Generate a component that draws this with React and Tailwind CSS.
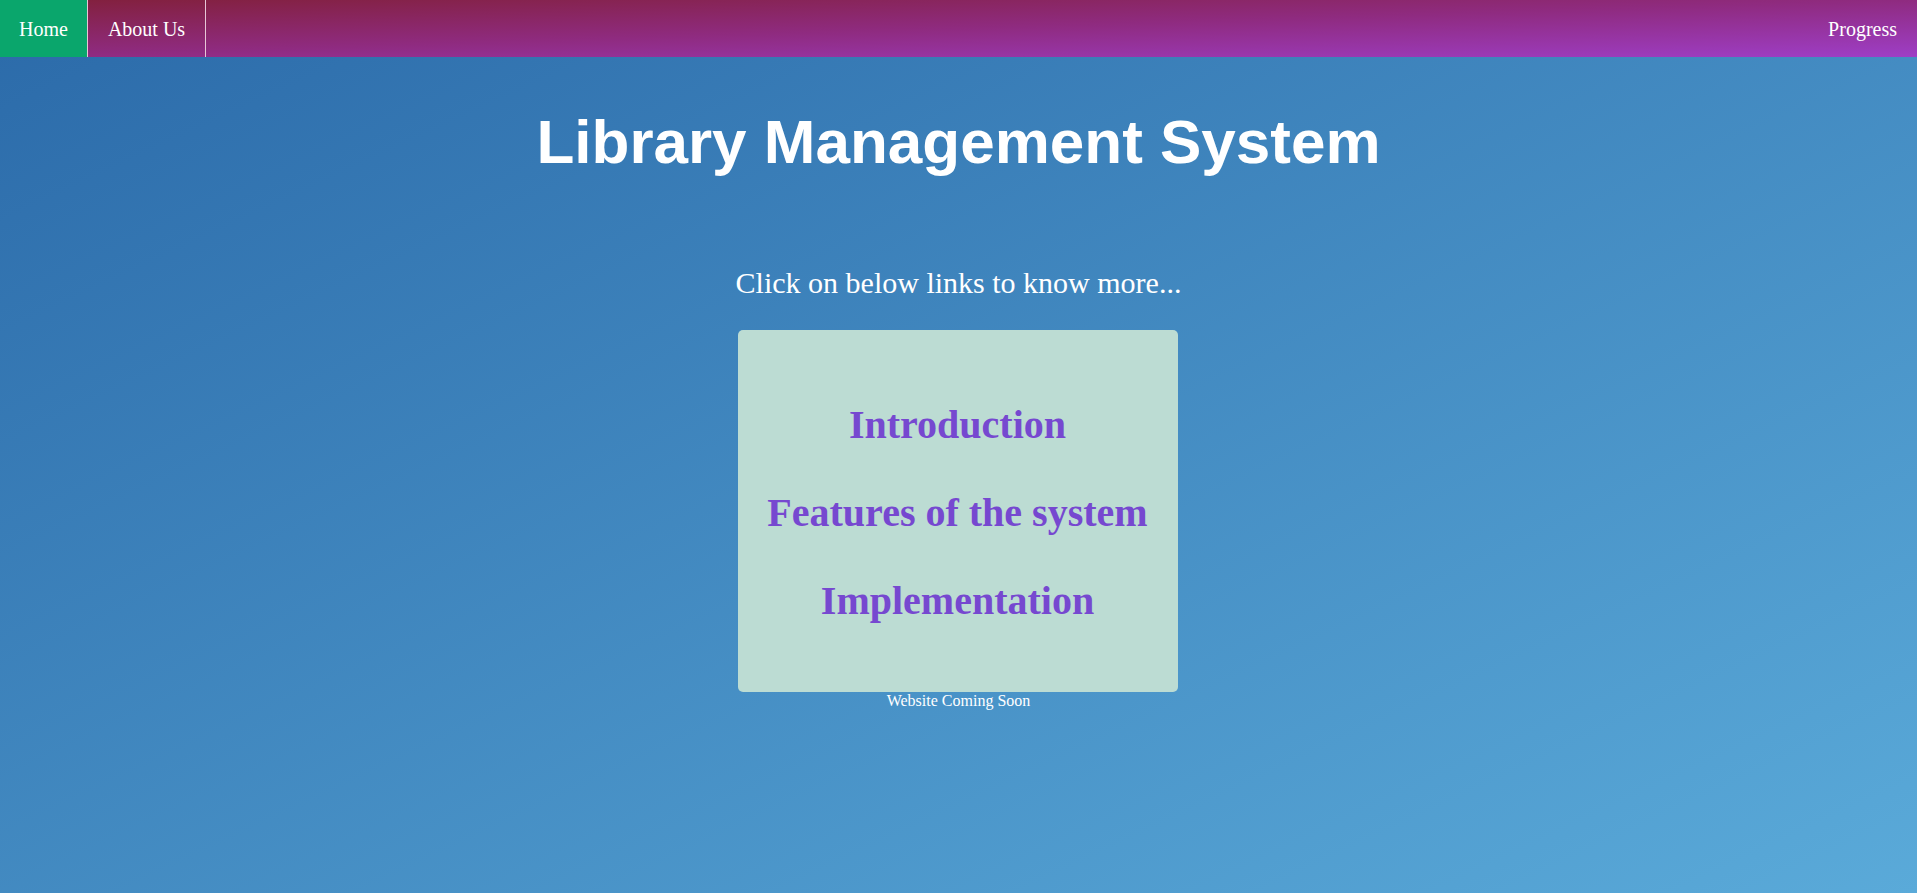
import React from "react";

const links = ["Introduction", "Features of the system", "Implementation"];

export default function App() {
  return (
    <div className="min-h-screen bg-[linear-gradient(to_bottom_right,#2b6aa9,#5aaad9)] font-['Liberation_Serif',serif] text-white">
      <nav className="flex h-[57px] items-stretch bg-[linear-gradient(to_bottom_right,#82203c_0%,#8f2b80_50%,#9e3ec6_100%)] text-[20px]">
        <a className="flex items-center border-r border-[#e7c7d6] bg-[#0aa66c] px-[19px]" href="#">
          Home
        </a>
        <a className="flex items-center border-r border-[#e7c7d6] px-5" href="#">
          About Us
        </a>
        <a className="ml-auto flex items-center px-5" href="#">
          Progress
        </a>
      </nav>

      <h1 className="mt-[49px] text-center font-['Liberation_Sans',sans-serif] text-[62px] font-bold leading-[72px]">
        Library Management System
      </h1>

      <p className="mt-[88px] text-center text-[30px] leading-[34px]">
        Click on below links to know more...
      </p>

      <div className="mx-auto mt-[30px] flex h-[362px] w-[440px] -translate-x-px flex-col items-center justify-center gap-[42px] rounded-[5px] bg-[#bcdcd3] pt-1">
        {links.map((l) => (
          <a key={l} href="#" className="text-[40px] font-bold leading-[46px] text-[#7648d0]">
            {l}
          </a>
        ))}
      </div>
      <p className="text-center text-[16px] leading-[18px]">Website Coming Soon</p>
    </div>
  );
}
